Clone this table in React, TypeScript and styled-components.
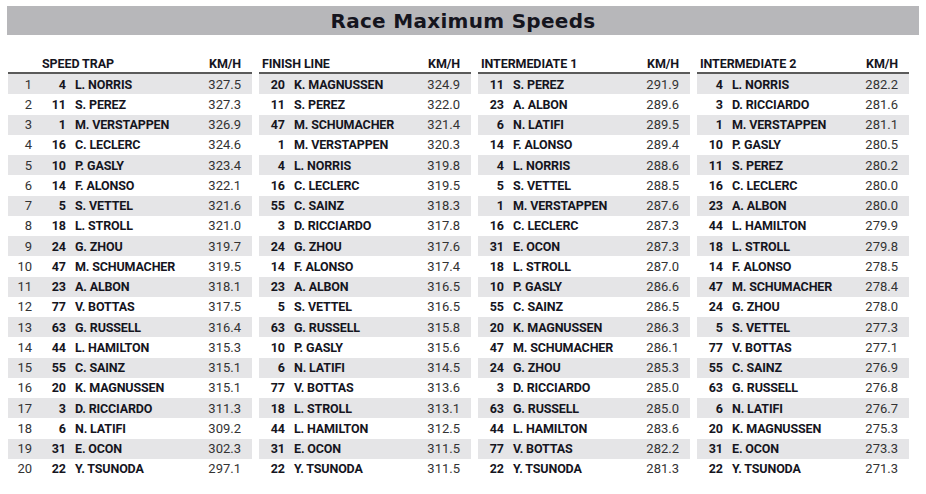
import * as React from 'react'
import styled, { createGlobalStyle } from 'styled-components'

type Entry = [number, string, string]

const GlobalStyle = createGlobalStyle`
  body {
    margin: 0;
    background: #ffffff;
    font-family: Roboto, 'Liberation Sans', sans-serif;
  }
`

const SECTIONS: { title: string; rows: Entry[] }[] = [
  {
    title: 'SPEED TRAP',
    rows: [
      [4, 'L. NORRIS', '327.5'],
      [11, 'S. PEREZ', '327.3'],
      [1, 'M. VERSTAPPEN', '326.9'],
      [16, 'C. LECLERC', '324.6'],
      [10, 'P. GASLY', '323.4'],
      [14, 'F. ALONSO', '322.1'],
      [5, 'S. VETTEL', '321.6'],
      [18, 'L. STROLL', '321.0'],
      [24, 'G. ZHOU', '319.7'],
      [47, 'M. SCHUMACHER', '319.5'],
      [23, 'A. ALBON', '318.1'],
      [77, 'V. BOTTAS', '317.5'],
      [63, 'G. RUSSELL', '316.4'],
      [44, 'L. HAMILTON', '315.3'],
      [55, 'C. SAINZ', '315.1'],
      [20, 'K. MAGNUSSEN', '315.1'],
      [3, 'D. RICCIARDO', '311.3'],
      [6, 'N. LATIFI', '309.2'],
      [31, 'E. OCON', '302.3'],
      [22, 'Y. TSUNODA', '297.1'],
    ],
  },
  {
    title: 'FINISH LINE',
    rows: [
      [20, 'K. MAGNUSSEN', '324.9'],
      [11, 'S. PEREZ', '322.0'],
      [47, 'M. SCHUMACHER', '321.4'],
      [1, 'M. VERSTAPPEN', '320.3'],
      [4, 'L. NORRIS', '319.8'],
      [16, 'C. LECLERC', '319.5'],
      [55, 'C. SAINZ', '318.3'],
      [3, 'D. RICCIARDO', '317.8'],
      [24, 'G. ZHOU', '317.6'],
      [14, 'F. ALONSO', '317.4'],
      [23, 'A. ALBON', '316.5'],
      [5, 'S. VETTEL', '316.5'],
      [63, 'G. RUSSELL', '315.8'],
      [10, 'P. GASLY', '315.6'],
      [6, 'N. LATIFI', '314.5'],
      [77, 'V. BOTTAS', '313.6'],
      [18, 'L. STROLL', '313.1'],
      [44, 'L. HAMILTON', '312.5'],
      [31, 'E. OCON', '311.5'],
      [22, 'Y. TSUNODA', '311.5'],
    ],
  },
  {
    title: 'INTERMEDIATE 1',
    rows: [
      [11, 'S. PEREZ', '291.9'],
      [23, 'A. ALBON', '289.6'],
      [6, 'N. LATIFI', '289.5'],
      [14, 'F. ALONSO', '289.4'],
      [4, 'L. NORRIS', '288.6'],
      [5, 'S. VETTEL', '288.5'],
      [1, 'M. VERSTAPPEN', '287.6'],
      [16, 'C. LECLERC', '287.3'],
      [31, 'E. OCON', '287.3'],
      [18, 'L. STROLL', '287.0'],
      [10, 'P. GASLY', '286.6'],
      [55, 'C. SAINZ', '286.5'],
      [20, 'K. MAGNUSSEN', '286.3'],
      [47, 'M. SCHUMACHER', '286.1'],
      [24, 'G. ZHOU', '285.3'],
      [3, 'D. RICCIARDO', '285.0'],
      [63, 'G. RUSSELL', '285.0'],
      [44, 'L. HAMILTON', '283.6'],
      [77, 'V. BOTTAS', '282.2'],
      [22, 'Y. TSUNODA', '281.3'],
    ],
  },
  {
    title: 'INTERMEDIATE 2',
    rows: [
      [4, 'L. NORRIS', '282.2'],
      [3, 'D. RICCIARDO', '281.6'],
      [1, 'M. VERSTAPPEN', '281.1'],
      [10, 'P. GASLY', '280.5'],
      [11, 'S. PEREZ', '280.2'],
      [16, 'C. LECLERC', '280.0'],
      [23, 'A. ALBON', '280.0'],
      [44, 'L. HAMILTON', '279.9'],
      [18, 'L. STROLL', '279.8'],
      [14, 'F. ALONSO', '278.5'],
      [47, 'M. SCHUMACHER', '278.4'],
      [24, 'G. ZHOU', '278.0'],
      [5, 'S. VETTEL', '277.3'],
      [77, 'V. BOTTAS', '277.1'],
      [55, 'C. SAINZ', '276.9'],
      [63, 'G. RUSSELL', '276.8'],
      [6, 'N. LATIFI', '276.7'],
      [20, 'K. MAGNUSSEN', '275.3'],
      [31, 'E. OCON', '273.3'],
      [22, 'Y. TSUNODA', '271.3'],
    ],
  },
]

const Page = styled.div`
  padding: 6px 0 0 7px;
  width: 912px;
`

const TitleBar = styled.div`
  height: 29px;
  display: flex;
  align-items: center;
  justify-content: center;
  background: #b7b7ba;
  color: #15151e;
  font-family: 'DejaVu Sans', sans-serif;
  font-weight: 700;
  font-size: 20px;
  letter-spacing: 0.3px;
`

const Table = styled.div`
  margin: 20px 0 0 1px;
  display: flex;
  gap: 7px;
`

const Section = styled.div<{ $withPos: boolean }>`
  width: ${p => (p.$withPos ? 244 : 212)}px;
  display: flex;
  flex-direction: column;
`

const HeaderRow = styled.div<{ $withPos: boolean }>`
  height: 17px;
  display: grid;
  grid-template-columns: ${p => (p.$withPos ? '34px ' : '')}1fr auto;
  align-items: center;
  padding: 0 11px 0 ${p => (p.$withPos ? 0 : 3)}px;
  border-bottom: 2px solid #5a5a5a;
  font-size: 12.5px;
  letter-spacing: -0.1px;
  font-weight: 700;
  color: #15151e;
`

const Row = styled.div<{ $striped: boolean; $withPos: boolean }>`
  height: 20.25px;
  display: grid;
  grid-template-columns: ${p => (p.$withPos ? '32px ' : '')}26px 1fr auto;
  align-items: center;
  padding-right: 11px;
  background: ${p => (p.$striped ? '#e5e5e7' : '#ffffff')};
  font-size: 13px;
`

const Pos = styled.span`
  padding-right: 8px;
  text-align: right;
  color: #333333;
`

const CarNo = styled.span`
  text-align: right;
  font-size: 12.5px;
  font-weight: 700;
  color: #15151e;
`

const Driver = styled.span`
  padding-left: 9px;
  font-size: 12.5px;
  letter-spacing: -0.15px;
  font-weight: 700;
  color: #15151e;
  white-space: nowrap;
`

const Speed = styled.span`
  text-align: right;
  color: #333333;
`

const App = () => (
  <>
    <GlobalStyle />
    <Page>
      <TitleBar>Race Maximum Speeds</TitleBar>
      <Table>
        {SECTIONS.map((section, si) => {
          const withPos = si === 0
          return (
            <Section key={section.title} $withPos={withPos}>
              <HeaderRow $withPos={withPos}>
                {withPos && <span />}
                <span>{section.title}</span>
                <span>KM/H</span>
              </HeaderRow>
              {section.rows.map(([no, name, speed], i) => (
                <Row key={name} $striped={i % 2 === 0} $withPos={withPos}>
                  {withPos && <Pos>{i + 1}</Pos>}
                  <CarNo>{no}</CarNo>
                  <Driver>{name}</Driver>
                  <Speed>{speed}</Speed>
                </Row>
              ))}
            </Section>
          )
        })}
      </Table>
    </Page>
  </>
)

export default App
